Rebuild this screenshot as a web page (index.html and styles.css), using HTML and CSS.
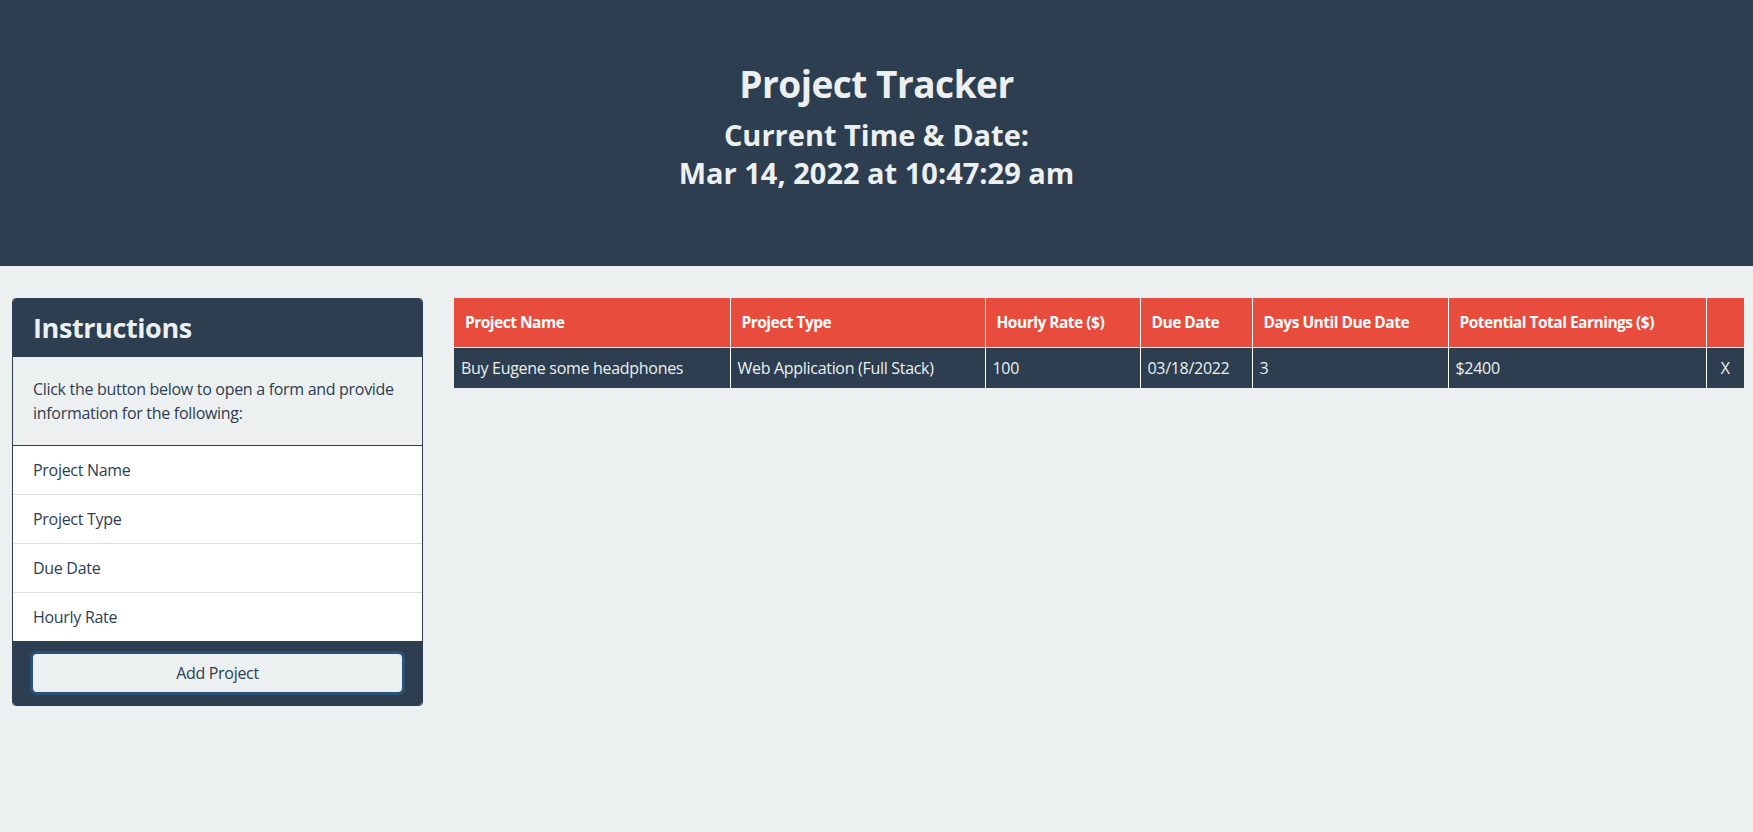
FILE: index.html
```html
<!DOCTYPE html>
<html lang="en">
<head>
<meta charset="utf-8">
<title>Project Tracker</title>
<link rel="stylesheet" href="styles.css">
</head>
<body>
<header class="hero">
  <h1 class="hero-title">Project Tracker</h1>
  <h2 class="hero-sub">Current Time &amp; Date:<br>Mar 14, 2022 at 10:47:29 am</h2>
</header>
<main class="layout">
  <section class="card">
    <div class="card-header"><h2 class="card-title">Instructions</h2></div>
    <div class="card-body"><p class="card-text">Click the button below to open a form and provide information for the following:</p></div>
    <ul class="list">
      <li class="list-item">Project Name</li>
      <li class="list-item">Project Type</li>
      <li class="list-item">Due Date</li>
      <li class="list-item">Hourly Rate</li>
    </ul>
    <div class="card-footer"><button class="btn" type="button">Add Project</button></div>
  </section>
  <section class="table-wrap">
    <table class="projects">
      <thead>
        <tr>
          <th class="c-name">Project Name</th>
          <th class="c-type">Project Type</th>
          <th class="c-rate">Hourly Rate ($)</th>
          <th class="c-due">Due Date</th>
          <th class="c-days">Days Until Due Date</th>
          <th class="c-earn">Potential Total Earnings ($)</th>
          <th class="c-del"></th>
        </tr>
      </thead>
      <tbody>
        <tr>
          <td>Buy Eugene some headphones</td>
          <td>Web Application (Full Stack)</td>
          <td>100</td>
          <td>03/18/2022</td>
          <td>3</td>
          <td>$2400</td>
          <td class="del">X</td>
        </tr>
      </tbody>
    </table>
  </section>
</main>
</body>
</html>
```

FILE: styles.css
```css
* { box-sizing: border-box; }
html, body { height: 100%; }
body {
  margin: 0;
  background: #ecf0f1;
  color: #2c3e50;
  font-family: "Open Sans", "Noto Sans", sans-serif;
  font-size: 16px;
  line-height: 24px;
  letter-spacing: -0.3px;
}
.hero {
  background: #2c3e50;
  color: #ecf0f1;
  text-align: center;
  padding: 60px 0 0;
  height: 266px;
}
.hero-title {
  margin: 0 0 8px;
  font-size: 37px;
  line-height: 48px;
  font-weight: 700;
  letter-spacing: -0.5px;
}
.hero-sub {
  margin: 0;
  font-size: 29px;
  line-height: 38px;
  font-weight: 700;
  letter-spacing: 0;
}
.layout {
  display: grid;
  grid-template-columns: 411px 1fr;
  column-gap: 31px;
  align-items: start;
  padding: 32px 9px 0 12px;
}
.card {
  border: 1px solid #2c3e50;
  border-radius: 4px;
  overflow: hidden;
  background: #fff;
}
.card-header {
  background: #2c3e50;
  color: #ecf0f1;
  padding: 12px 20px;
}
.card-title {
  margin: 0;
  font-size: 27px;
  line-height: 34px;
  font-weight: 700;
  letter-spacing: -0.4px;
}
.card-body {
  background: #ecf0f1;
  padding: 20px;
  border-bottom: 1px solid #2c3e50;
}
.card-text { margin: 0; }
.list { list-style: none; margin: 0; padding: 0; }
.list-item {
  padding: 12px 20px;
  border-bottom: 1px solid #dcdfe1;
  background: #fff;
}
.list-item:last-child { border-bottom: 0; }
.card-footer {
  background: #2c3e50;
  padding: 13px 20px;
}
.btn {
  display: block;
  width: 100%;
  height: 38px;
  background: #ecf0f1;
  color: #2c3e50;
  border: 0;
  border-radius: 4px;
  box-shadow: 0 0 0 3px #2b5279;
  font-family: inherit;
  font-size: 16px;
  letter-spacing: -0.3px;
}
.table-wrap { min-width: 0; }
.projects {
  width: 100%;
  table-layout: fixed;
  border-collapse: collapse;
}
.projects th {
  background: #e74c3c;
  color: #fff;
  font-weight: 700;
  font-size: 15.5px;
  letter-spacing: -0.5px;
  text-align: left;
  padding: 12px 11px 13px;
  border: 1px solid #fff;
  border-top: 0;
  line-height: 24px;
}
.projects td {
  background: #2c3e50;
  color: #ecf0f1;
  padding: 8px 7px;
  border: 1px solid #fff;
  border-bottom: 0;
  line-height: 24px;
  white-space: nowrap;
}
.projects td.del { text-align: center; padding: 8px 0; }
.projects tr > :first-child { border-left: 0; }
.projects tr > :last-child { border-right: 0; }
.c-name { width: 276px; }
.c-type { width: 255px; }
.c-rate { width: 155px; }
.c-due { width: 112px; }
.c-days { width: 196px; }
.c-earn { width: 258px; }
.c-del { width: 38px; }
```
